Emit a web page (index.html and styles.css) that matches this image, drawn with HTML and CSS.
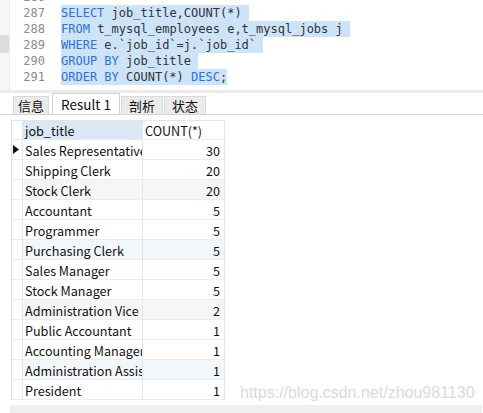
FILE: index.html
```html
<!DOCTYPE html>
<html>
<head>
<meta charset="utf-8">
<link rel="stylesheet" href="styles.css">
</head>
<body>
<div class="editor">
  <div class="edge"><div class="edge-mark"></div></div>
  <div class="gutter">
    <div class="num">286</div>
    <div class="num">287</div>
    <div class="num">288</div>
    <div class="num">289</div>
    <div class="num">290</div>
    <div class="num">291</div>
  </div>
  <div class="code">
    <div class="line"></div>
    <div class="line"><span class="sel"><span class="kw">SELECT</span> job_title,COUNT(*) </span></div>
    <div class="line"><span class="sel"><span class="kw">FROM</span> t_mysql_employees e,t_mysql_jobs j </span></div>
    <div class="line"><span class="sel"><span class="kw">WHERE</span> e.`job_id`=j.`job_id` </span></div>
    <div class="line"><span class="sel"><span class="kw">GROUP BY</span> job_title </span></div>
    <div class="line"><span class="sel"><span class="kw">ORDER BY</span> COUNT(*) <span class="kw">DESC</span>;</span></div>
  </div>
</div>
<div class="splitter"></div>
<div class="tabs">
  <div class="tab tab-first">信息</div>
  <div class="tab active">Result 1</div>
  <div class="tab">剖析</div>
  <div class="tab">状态</div>
</div>
<div class="results">
  <div class="grid">
    <div class="cell ind"></div><div class="cell head sorted">job_title</div><div class="cell head">COUNT(*)</div>

    <div class="cell ind"><svg class="arrow" width="6" height="9" viewBox="0 0 6 9"><polygon points="0,0 6,4.5 0,9" fill="#111"/></svg></div><div class="cell">Sales Representative</div><div class="cell n">30</div>
    <div class="cell ind"></div><div class="cell">Shipping Clerk</div><div class="cell n">20</div>
    <div class="cell ind"></div><div class="cell gray">Stock Clerk</div><div class="cell n gray">20</div>
    <div class="cell ind"></div><div class="cell">Accountant</div><div class="cell n">5</div>
    <div class="cell ind"></div><div class="cell">Programmer</div><div class="cell n">5</div>
    <div class="cell ind"></div><div class="cell blue">Purchasing Clerk</div><div class="cell n blue">5</div>
    <div class="cell ind"></div><div class="cell">Sales Manager</div><div class="cell n">5</div>
    <div class="cell ind"></div><div class="cell">Stock Manager</div><div class="cell n">5</div>
    <div class="cell ind"></div><div class="cell gray">Administration Vice</div><div class="cell n gray">2</div>
    <div class="cell ind"></div><div class="cell">Public Accountant</div><div class="cell n">1</div>
    <div class="cell ind"></div><div class="cell">Accounting Manager</div><div class="cell n">1</div>
    <div class="cell ind"></div><div class="cell blue">Administration Assistant</div><div class="cell n blue">1</div>
    <div class="cell ind"></div><div class="cell">President</div><div class="cell n">1</div>
  </div>
  <div class="watermark">https://blog.csdn.net/zhou981130</div>
</div>
<div class="statusbar"></div>
</body>
</html>
```

FILE: styles.css
```css
* { box-sizing: border-box; }

body {
  margin: 0;
  width: 483px;
  height: 413px;
  overflow: hidden;
  background: #fff;
  font-family: "Noto Sans CJK SC", "Noto Sans", sans-serif;
}

.editor {
  display: flex;
  height: 90px;
  overflow: hidden;
}

.edge {
  width: 10px;
  flex: none;
  background: #f6f6f6;
  border-right: 1px solid #ebebeb;
}

.edge-mark {
  margin-top: 35px;
  width: 9px;
  height: 18px;
  background: #dcdcdc;
}

.gutter {
  width: 37px;
  flex: none;
  margin-top: -11px;
  padding-right: 2px;
  text-align: right;
  font: 12px/16px "DejaVu Sans Mono", monospace;
  color: #8a8a8a;
}

.num { height: 16px; }

.code {
  margin-top: -11px;
  padding-left: 14px;
  font: 12px/16px "DejaVu Sans Mono", monospace;
  color: #333;
}

.line {
  height: 16px;
  white-space: pre;
}

.sel {
  display: inline-block;
  height: 16px;
  background: #cce3f8;
}

.kw { color: #2d72da; }

.splitter {
  height: 3px;
  background: #ececec;
}

.tabs {
  display: flex;
  align-items: flex-end;
  height: 22px;
  padding-left: 13px;
  border-bottom: 1px solid #d6d6d6;
  font-size: 13px;
  color: #111;
}

.tab {
  height: 18px;
  line-height: 17px;
  padding: 0 7px;
  margin-left: 1px;
  background: #ebebeb;
  border: 1px solid #dadada;
  border-bottom: none;
}

.tab-first {
  padding: 0 4px;
  margin-left: 0;
  margin-right: 2px;
}

.tab.active {
  height: 21px;
  line-height: 21px;
  padding: 0 8px;
  background: #fff;
  border-color: #d2d2d2;
  font-size: 13.5px;
}

.results {
  position: relative;
  height: 290px;
  padding: 5px 0 0 11px;
}

.grid {
  display: grid;
  grid-template-columns: 11px 120px 82px;
  grid-template-rows: 19px repeat(13, 20px);
  width: 214px;
  border-left: 1px solid #dcdcdc;
  border-top: 1px solid #e4e4e4;
  font-size: 12.6px;
  color: #111;
}

.cell {
  border-right: 1px solid #e6e6e6;
  border-bottom: 1px solid #ececec;
  padding: 2px 0 0 2px;
  line-height: 17px;
  white-space: nowrap;
  overflow: hidden;
}

.cell.head { padding-top: 1px; }

.cell.sorted { background: #dae8f6; }

.cell.ind {
  padding: 0;
  display: flex;
  align-items: center;
  justify-content: center;
}

.cell.n {
  text-align: right;
  padding-right: 4px;
}

.cell.gray { background: #f6f6f6; }
.cell.blue { background: #f2f7fc; }

.arrow { display: block; margin-left: -2px; }

.watermark {
  position: absolute;
  left: 240px;
  top: 269px;
  font: 16px "Liberation Sans", Arial, sans-serif;
  color: #dadada;
}

.statusbar {
  height: 8px;
  margin-left: 10px;
  margin-right: 1px;
  background: #efefef;
}
```
